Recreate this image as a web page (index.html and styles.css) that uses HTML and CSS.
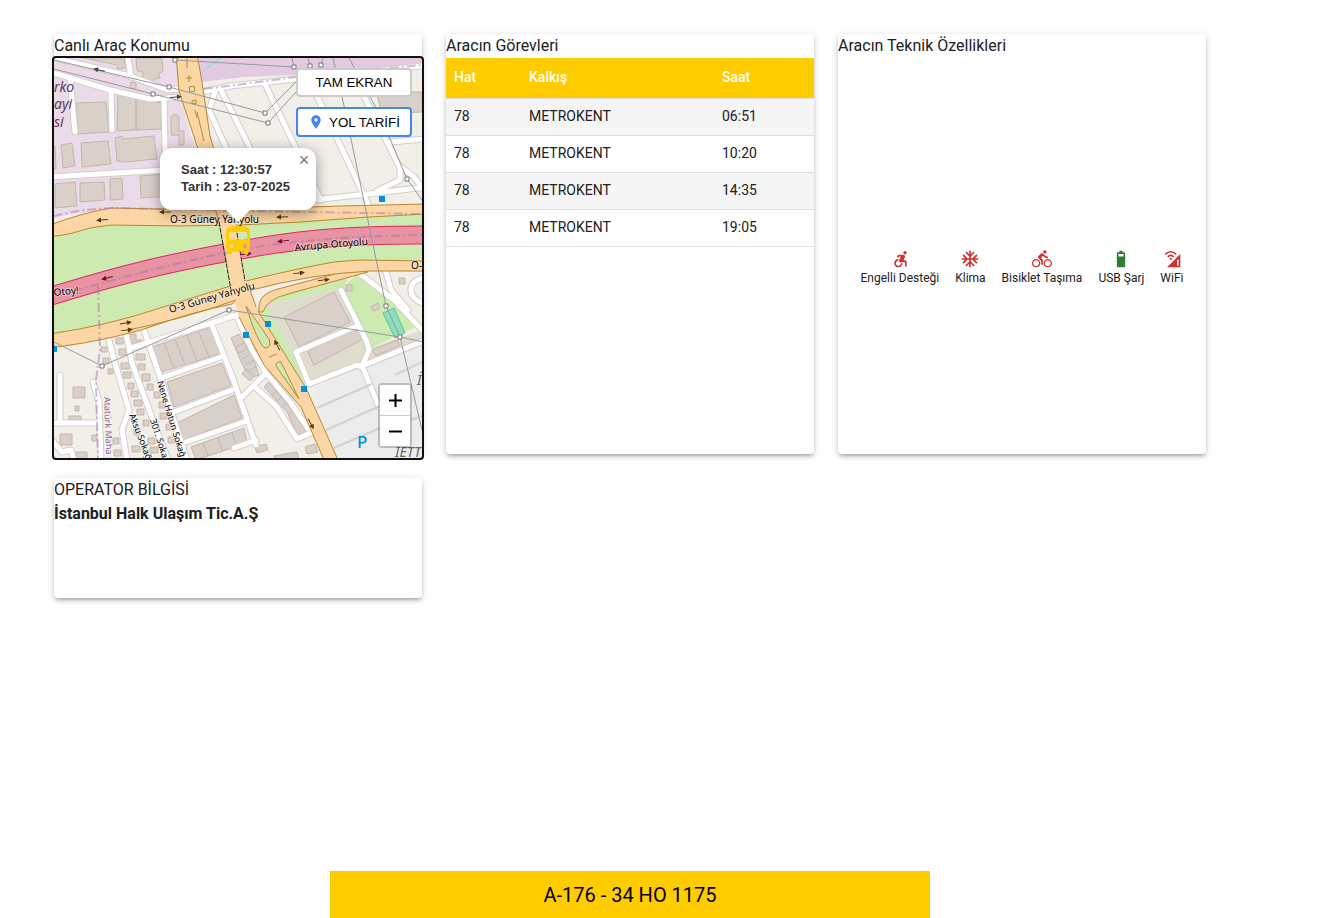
FILE: index.html
```html
<!DOCTYPE html>
<html lang="tr">
<head>
  <meta charset="UTF-8">
  <meta name="viewport" content="width=device-width, initial-scale=1.0">
  <title>Araç Bilgisi</title>
  <link rel="stylesheet" href="styles.css">
</head>
<body>
  <main class="grid">
    <section class="card">
      <h2>Canlı Araç Konumu</h2>
      <div class="map">
        <svg class="map-tiles" viewBox="54 58 368 400" preserveAspectRatio="xMidYMid slice" aria-hidden="true">
          <rect x="54" y="58" width="368" height="400" fill="#f2efe9"/>
          <!-- areas -->
          <path class="industrial" d="M54 58H176L179 91L191 136L197 150V210L124 208L80 213L54 218Z"/>
          <path d="M197 58H422V64L297 75L244 77L202 82Z" fill="#e1cbe0"/>
          <path class="green" d="M54 228L160 215H422V266L350 262L240 290L54 340Z"/>
          <path d="M263 304L344 287L371 348L422 330V345L362 368L311 385L290 355Z" fill="#dfddce"/>
          <path class="green" d="M256 309L266 303L300 370L306 388L292 366ZM341 288L360 272L394 300L414 328L371 348Z"/>
          <path class="green" d="M262 300L350 274L344 287L264 305Z"/>
          <path d="M311 386L362 368L422 344V458H337Z" fill="#ececec"/>
          <path d="M383 313L394 308L405 333L395 338Z" fill="#88e0be" stroke="#62bf9c"/>
          <path d="M204 70L221 58" stroke="#aad3df" stroke-width="2"/>

          <!-- buildings -->
          <g class="building">
            <path d="M76 103L106 102L109 132L78 134ZM118 94L136 98V130L117 131ZM136 98L162 103L161 129L136 130ZM84 58H124L126 68L118 69L117 65Z"/>
            <path d="M136 58H162L163 71L159 74L160 78L154 79L152 82L143 79L143 72L137 71ZM131 82L136 83V89L130 88ZM171 117Q175 112 179 117V131H184V145H179V135H171Z"/>
            <path d="M61 145L72 143L75 166L63 168ZM81 143L108 141L111 164L82 167ZM115 138L122 136L123 139L154 136L157 159L124 162L117 161Z"/>
            <path d="M55 184L75 182L77 206L55 208ZM80 183L104 182L105 200L80 202ZM110 179L122 178L123 199L110 200ZM140 176L172 174V196L141 198ZM50 146H55L56 169H50Z"/>
            <path d="M378 98L374 92H422V112L381 114Z"/>
            <path d="M152 347L211 327L222 353L162 372ZM167 382L222 363L231 386L174 407ZM177 423L234 395L242 418L183 440ZM191 447L244 428L247 443L196 460Z"/>
            <path d="M164 343L174 368M175 339L185 365M187 336L197 361M199 332L209 357M203 443L208 456M218 438L223 452M232 433L237 446"/>
            <path d="M284 317L334 292L350 322L299 347ZM307 350L361 326L365 338L314 365ZM372 350L397 340L400 345L376 356ZM371 307L378 303L380 308L373 311Z"/>
            <path d="M346 285h6v6h-6zM399 278h6v6h-6zM73 387h12v11h-12zM75 406h4v5h-4zM60 434h12v11h-12zM76 452h11v8h-11zM69 416h12v4h-12z"/>
            <path d="M231 338L239 334L254 360L259 375L250 378L243 366ZM236 347l8 -4M239 353l8 -4M242 359l9 -5M245 365l9 -5M248 371l9 -5"/>
            <path d="M264 387L269 382L292 410L306 432L298 436L287 412ZM271 396l7 -6M277 401l6 -6M282 407l6 -6M288 415l6 -5M242 374l4 -5 8 7 -4 5z"/>
            <path d="M255 447l11 -3 2 6 -11 3zM274 456l23 -4 2 8h-24zM305 447l10 -3 3 8 -11 2z"/>
            <path d="M101 347h6v5h-6zM103 358h6v5h-6zM108 369h5v5h-5zM116 338h7v6h-7zM119 349h7v6h-7zM121 363h8v6h-8zM123 372h8v6h-8zM128 383h6v6h-6zM130 334h6v6h-6zM137 340h5v6h-5zM131 342h6v5h-6zM136 354h9v6h-9zM138 364h7v6h-7zM142 374h8v7h-8zM147 384h6v6h-6zM131 391h7v6h-7zM134 400h8v6h-8zM137 409h7v6h-7zM143 420h6v6h-6zM134 429h6v6h-6zM148 438h7v6h-7zM150 447h8v6h-8zM113 438h6v6h-6zM114 450h7v6h-7zM154 392h6v6h-6zM159 402h6v6h-6zM160 413h7v6h-7zM166 424h7v6h-7zM168 437h7v6h-7zM132 446h8v6h-8zM92 435h5v6h-5z"/>
          </g>

          <!-- minor roads: casing, then fill -->
          <defs>
            <g id="minor">
              <path d="M50 57L130 76L168 90L186 88M50 72L110 90L150 99L183 97"/>
              <path d="M70 78L75 132M111 92L112 130M128 58L131 77M164 99L165 150M50 177L165 170"/>
              <path d="M202 92L230 86L297 79L422 66M265 84L321 200M221 90L252 152M215 92L209 110L228 152M317 96L369 206M364 96L400 168V180L377 191"/>
              <path d="M390 142L426 139M401 167L414 177L424 190M312 200L377 193L426 187"/>
              <path d="M341 290L367 342L369 350L362 366L426 340M357 326L296 352L309 384L357 365L363 368L379 407"/>
              <path d="M109 340L114 360L129 410L122 430L127 460M126 333L132 363L154 423L168 460M144 330L161 380L187 460M131 348L237 315M161 378L221 357M174 412L232 390M186 442L244 422M212 325L232 376L256 445M234 448L256 440"/>
              <path d="M236 315L252 350L266 373L241 398M266 373L291 403L311 433L297 439L277 407L254 386"/>
              <path d="M60 375V423M50 423H100M93 382L99 402L101 460M50 438L62 452L71 450L74 460"/>
              <path d="M359 273L394 300L424 332M386 272L391 290L408 310M424 278Q412 280 411 289T424 304"/>
            </g>
          </defs>
          <use class="road casing" href="#minor"/>
          <use class="road" href="#minor"/>
          <path class="bay" d="M317 408L372 384M326 430L380 406M334 448L380 428M395 375L422 362M411 420L422 416"/>

          <!-- main roads -->
          <path class="motorway-edge" d="M48 297C110 278 150 267 224 253S340 235 428 235"/>
          <path class="motorway" d="M48 297C110 278 150 267 224 253S340 235 428 235"/>
          <g class="primary">
            <path d="M50 225Q85 212 111 208L160 209H250L340 206L426 204V214L370 217L300 222L240 225L180 226L111 225L90 228Q70 235 50 237Z"/>
            <path d="M259 312C258 297 265 293 278 289L365 266L368 272L288 294Q267 299 263 312Z"/>
            <path d="M50 334Q110 325 160 308L224 288L250 280Q300 268 334 262L360 260L426 261V271L370 271Q310 274 248 291L232 304Q190 313 165 322Q120 339 50 348Z"/>
            <path d="M176 54L179 91L199 152L219 222H236L210 136L202 82L197 54Z"/>
          </g>
          <path d="M219 218L232 290L239 317L264 365L301 407L324 460H338L306 388L274 337L256 307L246 280L235 218Z" fill="#fcd6a4"/>
          <path class="primary-line" d="M239 317L264 365L301 407L324 460M338 460L306 388L274 337L258 311M248 284L256 307M128 330Q180 320 236 300M197 112L204 141M195 110L197 118"/>
          <path d="M219 222L231 290M236 227L245 281" stroke="#222" stroke-dasharray="5 1"/>
          <g class="island">
            <path d="M246 306L269 339Q272 348 265 348Q258 344 246 306ZM276 366Q276 361 281 362L299 399ZM189 87l5 -1 1 5 -5 1zM192 101l4 -1v4l-4 -1z"/>
            <path d="M187 58V68M189 75V82M186 78h6M269 357l8 -3"/>
          </g>
          <path class="border-line" d="M54 216Q84 208 120 208L250 211L422 214M74 291Q150 269 224 253T422 235M204 89L297 77L422 65M98 286L100 350L96 380L98 458"/>

          <!-- power lines -->
          <g class="power">
            <path d="M54 60L169 87L265 113L296 82M54 69L153 94L268 123L296 92M175 60L294 67L292 58M310 66L308 58M321 65L323 58M333 58L345 110L372 240L386 306L400 337L422 430M349 58L380 115L407 179L424 203M54 342L102 366L229 310L400 337L424 342"/>
            <path class="pylon" d="M173 58h4v4h-4zM167 85h4v4h-4zM151 92h4v4h-4zM292 65h4v4h-4zM308 64h4v4h-4zM319 63h4v4h-4zM263 111h4v4h-4zM266 121h4v4h-4zM405 177h4v4h-4zM384 304h4v4h-4zM398 335h4v4h-4zM227 308h4v4h-4zM100 364h4v4h-4z"/>
          </g>

          <!-- one way arrows -->
          <defs>
            <path id="arrow" d="M-6 -0.5H1V-2.5L6 0L1 2.5V0.5H-6Z"/>
          </defs>
          <g fill="#553a08">
            <use href="#arrow" transform="translate(99 70) rotate(192)" fill="#444"/>
            <use href="#arrow" transform="translate(176 97) rotate(-5)" fill="#444"/>
            <use href="#arrow" transform="translate(102 220) rotate(176)"/>
            <use href="#arrow" transform="translate(165 212) rotate(180)"/>
            <use href="#arrow" transform="translate(282 217) rotate(177)"/>
            <use href="#arrow" transform="translate(126 323) rotate(-10)"/>
            <use href="#arrow" transform="translate(127 330) rotate(-6)"/>
            <use href="#arrow" transform="translate(299 273) rotate(-6)"/>
            <use href="#arrow" transform="translate(324 280) rotate(-8)"/>
            <use href="#arrow" transform="translate(277 345) rotate(243)"/>
            <use href="#arrow" transform="translate(311 424) rotate(63)"/>
            <use href="#arrow" transform="translate(107 278) rotate(166)" fill="#7d0036"/>
            <use href="#arrow" transform="translate(283 241) rotate(173)" fill="#7d0036"/>
            <use href="#arrow" transform="translate(246 254) rotate(-8)" fill="#7d0036"/>
          </g>
          <path d="M379 196h6v6h-6zM265 321h6v6h-6zM243 332h6v6h-6zM301 386h6v6h-6zM51 346h6v6h-6z" fill="#0092da"/>

          <!-- street names -->
          <g class="names">
            <text x="170" y="223">O-3 Güney Yanyolu</text>
            <text transform="translate(170 313) rotate(-16)">O-3 Güney Yanyolu</text>
            <text transform="translate(295 251) rotate(-5)">Avrupa Otoyolu</text>
            <text transform="translate(54 296) rotate(-6)">Otoy!</text>
            <text x="411" y="269">O-</text>
            <g class="small">
              <text transform="translate(129 415) rotate(69)">Aksu Sokağ</text>
              <text transform="translate(150 420) rotate(72)">301. Soka</text>
              <text transform="translate(157 382) rotate(73)">Nene Hatun Sokağ</text>
              <text transform="translate(104 397) rotate(88)" fill="#8d618b">Atatürk Maha</text>
            </g>
          </g>
          <g class="place">
            <text x="54" y="92">rko</text>
            <text x="54" y="109">ayi</text>
            <text x="54" y="127">si</text>
            <text x="395" y="457" fill="#666">İETT</text>
            <text x="417" y="385" fill="#666">İ</text>
          </g>
          <text class="parking" x="357" y="448">P</text>
        </svg>

        <svg class="bus" viewBox="0 0 24 24" aria-hidden="true"><path d="M4 16c0 .88.39 1.67 1 2.22V20c0 .55.45 1 1 1h1c.55 0 1-.45 1-1v-1h8v1c0 .55.45 1 1 1h1c.55 0 1-.45 1-1v-1.78c.61-.55 1-1.34 1-2.22V6c0-3.5-3.58-4-8-4s-8 .5-8 4v10zm3.5 1c-.83 0-1.5-.67-1.5-1.5S6.67 14 7.5 14s1.5.67 1.5 1.5S8.33 17 7.5 17zm9 0c-.83 0-1.5-.67-1.5-1.5s.67-1.5 1.5-1.5 1.5.67 1.5 1.5-.67 1.5-1.5 1.5zm1.5-6H6V6h12v5z"/></svg>

        <div class="popup">
          <button class="popup-close" type="button" aria-label="Kapat">×</button>
          <div>Saat : 12:30:57</div>
          <div>Tarih : 23-07-2025</div>
        </div>

        <div class="map-buttons">
          <button type="button">TAM EKRAN</button>
          <button type="button" class="directions">
            <svg viewBox="0 0 24 24" aria-hidden="true"><path d="M12 2C8.130 2 5 5.130 5 9c0 5.250 7 13 7 13s7-7.750 7-13c0-3.870-3.130-7-7-7zm0 9.500a2.500 2.500 0 0 1 0-5 2.500 2.500 0 0 1 0 5z"/></svg>
            YOL TARİFİ
          </button>
        </div>

        <div class="zoom">
          <button type="button" aria-label="Yakınlaştır">
            <svg viewBox="0 0 13 13" aria-hidden="true"><path d="M0 6.500H13M6.500 0V13"/></svg>
          </button>
          <button type="button" aria-label="Uzaklaştır">
            <svg viewBox="0 0 13 13" aria-hidden="true"><path d="M0 6.500H13"/></svg>
          </button>
        </div>
      </div>
    </section>

    <section class="card">
      <h2>Aracın Görevleri</h2>
      <table>
        <thead>
          <tr><th class="line">Hat</th><th>Kalkış</th><th class="time">Saat</th></tr>
        </thead>
        <tbody>
          <tr><td>78</td><td>METROKENT</td><td>06:51</td></tr>
          <tr><td>78</td><td>METROKENT</td><td>10:20</td></tr>
          <tr><td>78</td><td>METROKENT</td><td>14:35</td></tr>
          <tr><td>78</td><td>METROKENT</td><td>19:05</td></tr>
        </tbody>
      </table>
    </section>

    <section class="card">
      <h2>Aracın Teknik Özellikleri</h2>
      <div class="features">
        <div class="feature">
          <svg viewBox="0 0 24 24" aria-hidden="true"><circle cx="18" cy="4.54" r="2"/><path d="M15 17h-2c0 1.650-1.350 3-3 3s-3-1.350-3-3 1.350-3 3-3v-2c-2.760 0-5 2.240-5 5s2.240 5 5 5 5-2.240 5-5zm3-3.500h-1.860l1.670-3.670C18.420 8.500 17.440 7 15.960 7h-5.200c-.81 0-1.540.47-1.870 1.200L8.220 10l1.920.53.65-1.530H13l-1.830 4.100c-.6 1.330.39 2.900 1.850 2.900H18v5h2v-5.500c0-1.100-.9-2-2-2z"/></svg>
          Engelli Desteği
        </div>
        <div class="feature">
          <svg viewBox="0 0 24 24" aria-hidden="true"><path d="M22 11h-4.170l3.240-3.240-1.410-1.420L15 11h-2V9l4.660-4.660-1.420-1.410L13 6.170V2h-2v4.170L7.760 2.930 6.340 4.340 11 9v2H9L4.340 6.340 2.930 7.760 6.170 11H2v2h4.170l-3.240 3.240 1.410 1.420L9 13h2v2l-4.660 4.660 1.420 1.410L11 17.830V22h2v-4.170l3.240 3.240 1.420-1.410L13 15v-2h2l4.660 4.660 1.410-1.420L17.830 13H22z"/></svg>
          Klima
        </div>
        <div class="feature">
          <svg viewBox="0 0 24 24" aria-hidden="true"><path d="M15.5 5.5c1.1 0 2-.9 2-2s-.9-2-2-2-2 .9-2 2 .9 2 2 2zM5 12c-2.800 0-5 2.200-5 5s2.200 5 5 5 5-2.200 5-5-2.200-5-5-5zm0 8.500c-1.900 0-3.500-1.600-3.500-3.500s1.600-3.500 3.500-3.500 3.500 1.600 3.500 3.500-1.600 3.500-3.500 3.500zm5.800-10l2.400-2.400.8.8c1.300 1.300 3 2.100 5.100 2.100V9c-1.500 0-2.700-.6-3.600-1.500l-1.900-1.900c-.5-.4-1-.6-1.600-.6s-1.100.2-1.400.6L7.800 8.400c-.4.4-.6.9-.6 1.400 0 .6.2 1.100.6 1.400L11 14v5h2v-6.200l-2.200-2.300zM19 12c-2.800 0-5 2.200-5 5s2.200 5 5 5 5-2.200 5-5-2.200-5-5-5zm0 8.500c-1.900 0-3.500-1.600-3.500-3.500s1.600-3.500 3.500-3.500 3.500 1.600 3.500 3.500-1.600 3.500-3.500 3.500z"/></svg>
          Bisiklet Taşıma
        </div>
        <div class="feature available">
          <svg viewBox="0 0 24 24" aria-hidden="true"><path fill-rule="evenodd" d="M10 2h4v2h2q1 0 1 1v16q0 1-1 1H8q-1 0-1-1V5q0-1 1-1h2zM9 6v3h6V6z"/></svg>
          USB Şarj
        </div>
        <div class="feature">
          <svg viewBox="0 0 24 24" aria-hidden="true"><path fill-rule="evenodd" d="M22 6v16H6zM18 13v7h2v-7z"/><path class="wave" d="M4 6.500Q10.500 0 17 6.500M7 9.500Q10.500 6 14 9.500"/><path d="M8.500 11.500Q10.500 10 12.500 11.500L10.500 13.500Z"/></svg>
          WiFi
        </div>
      </div>
    </section>

    <section class="card short">
      <h2>OPERATOR BİLGİSİ</h2>
      <strong>İstanbul Halk Ulaşım Tic.A.Ş</strong>
    </section>
  </main>

  <footer>A-176 - 34 HO 1175</footer>
</body>
</html>
```
FILE: styles.css
```css
* {
  box-sizing: border-box;
}
body {
  margin: 0;
  padding-right: 75px;
  min-height: 100vh;
  display: flex;
  flex-direction: column;
  font-family: Roboto, Arial, sans-serif;
  font-size: 16px;
  line-height: 24px;
  color: #212121;
  background: #fff;
}
.grid {
  display: grid;
  grid-template-columns: repeat(3, 1fr);
  gap: 24px;
  align-items: start;
  padding: 34px 54px 24px;
}
.card {
  height: 420px;
  background: #fff;
  border-radius: 4px;
  box-shadow: 0 3px 3px -2px rgba(0,0,0,0.2), 0 3px 4px rgba(0,0,0,0.14), 0 1px 8px rgba(0,0,0,0.12);
}
.card.short {
  height: 120px;
}
h2 {
  margin: 0;
  font-size: 16px;
  font-weight: 400;
}
strong {
  font-weight: 700;
}

/* map */
.map {
  position: relative;
  height: 400px;
  outline: 2px solid #101010;
  border-radius: 2px;
}
.map-tiles {
  display: block;
  width: 100%;
  height: 100%;
}
.industrial {
  fill: #ebdbe8;
}
.green {
  fill: #cdebb0;
}
.building path {
  fill: #d9d0c9;
  stroke: #c4b6ab;
}
.road {
  fill: none;
  stroke: #fff;
  stroke-width: 5;
  stroke-linecap: round;
  stroke-linejoin: round;
}
.road.casing {
  stroke: #d3cecb;
  stroke-width: 7;
}
.bay {
  fill: none;
  stroke: #d2d2d2;
  stroke-width: 2;
}
.motorway-edge {
  fill: none;
  stroke: #dc2a67;
  stroke-width: 19;
}
.motorway {
  fill: none;
  stroke: #e892a2;
  stroke-width: 17;
}
.primary path {
  fill: #fcd6a4;
  stroke: #b88830;
}
.primary-line {
  fill: none;
  stroke: #b88830;
}
.island path {
  fill: #cdebb0;
  stroke: #b88830;
}
.border-line {
  fill: none;
  stroke: #a376a8;
  stroke-width: 2;
  stroke-dasharray: 9 3 2 3;
  opacity: 0.5;
}
.power path {
  fill: none;
  stroke: #999;
}
.power .pylon {
  fill: #fff;
  stroke: #777;
}
.names text {
  font-family: "Noto Sans", sans-serif;
  font-size: 10px;
  paint-order: stroke;
  stroke: rgba(255,255,255,0.4);
  stroke-width: 2;
}
.names .small text {
  font-size: 9px;
}
.place text {
  font-family: "Noto Sans", sans-serif;
  font-size: 14px;
  font-style: italic;
}
.place {
  fill: #63385c;
}
.parking {
  fill: #0092da;
  font-family: "Noto Sans", sans-serif;
  font-size: 17px;
  font-weight: 500;
}
.bus {
  position: absolute;
  left: 50%;
  top: 165px;
  width: 36px;
  margin-left: -18px;
  fill: #ffcc00;
}
.popup {
  position: absolute;
  left: 50%;
  top: 90px;
  width: 156px;
  margin-left: -78px;
  padding: 13px 21px 15px;
  background: #fff;
  border-radius: 12px;
  box-shadow: 0 3px 14px rgba(0,0,0,0.4);
  font: bold 13px/17px "Liberation Sans", Arial, sans-serif;
  color: #333;
}
.popup::after {
  content: "";
  position: absolute;
  left: 50%;
  top: 100%;
  margin-left: -12px;
  border: 12px solid transparent;
  border-top-color: #fff;
  border-bottom: none;
}
.popup-close {
  position: absolute;
  top: 0;
  right: 0;
  width: 24px;
  height: 24px;
  padding: 0;
  border: none;
  background: none;
  font: 18px/24px "Liberation Sans", Arial, sans-serif;
  color: #757575;
}
.map-buttons {
  position: absolute;
  top: 10px;
  right: 10px;
  width: 116px;
  display: grid;
  gap: 10px;
}
.map-buttons button {
  display: flex;
  align-items: center;
  justify-content: center;
  gap: 5px;
  height: 29px;
  padding: 0;
  border: 2px solid #ccc;
  border-radius: 4px;
  background: #fff;
  font-family: "Liberation Sans", Arial, sans-serif;
  color: #000;
}
.map-buttons .directions {
  height: 30px;
  border-color: #4285f4;
}
.directions svg {
  width: 16px;
  fill: #4285f4;
}
.zoom {
  position: absolute;
  right: 10px;
  bottom: 10px;
  width: 34px;
  border: 2px solid rgba(0,0,0,0.2);
  border-radius: 4px;
  background-clip: padding-box;
}
.zoom button {
  display: flex;
  align-items: center;
  justify-content: center;
  width: 100%;
  height: 30px;
  padding: 0;
  border: none;
  background: #fff;
}
.zoom button:first-child {
  height: 31px;
  border-bottom: 1px solid #ccc;
}
.zoom svg {
  width: 13px;
  stroke: #000;
  stroke-width: 2;
}

/* table */
table {
  width: 100%;
  border-collapse: separate;
  border-spacing: 0;
  font-size: 14px;
  line-height: 20px;
}
th, td {
  padding: 7px 8px 9px;
  text-align: left;
  border-bottom: 1px solid #e0e0e0;
}
th {
  background: #ffcc00;
  color: #fff;
  font-weight: 500;
  line-height: 24px;
}
.line {
  width: 75px;
}
.time {
  width: 100px;
}
tbody tr:nth-child(odd) {
  background: #f5f5f5;
}

/* features */
.features {
  display: flex;
  align-items: center;
  justify-content: center;
  gap: 16px;
  height: 100%;
}
.feature {
  display: flex;
  flex-direction: column;
  align-items: center;
  font-size: 12px;
  line-height: 18px;
}
.feature svg {
  width: 20px;
  height: 20px;
  fill: #d32f2f;
}
.feature.available svg {
  fill: #2e7d32;
}
.feature .wave {
  fill: none;
  stroke: #d32f2f;
  stroke-width: 2;
}

footer {
  width: 600px;
  max-width: 100%;
  margin: auto auto 0;
  padding: 13px 12px 11px;
  line-height: 23px;
  font-size: 20px;
  text-align: center;
  color: #000;
  background: #ffcc00;
}
```
